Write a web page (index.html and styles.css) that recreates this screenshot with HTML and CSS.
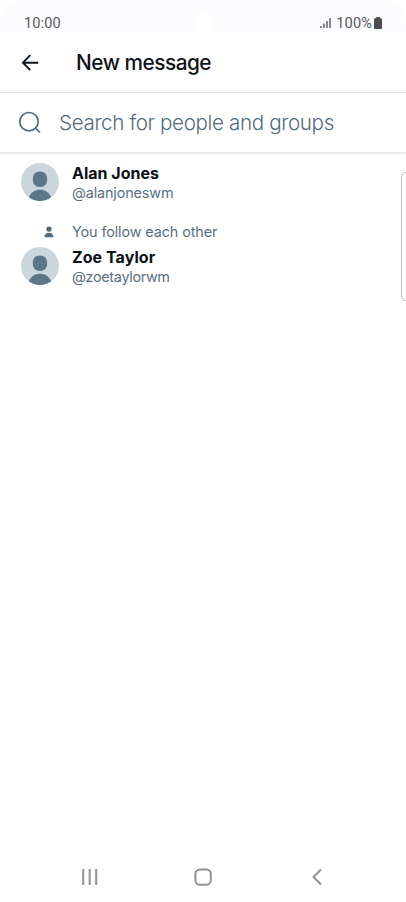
FILE: index.html
```html
<!DOCTYPE html>
<html lang="en">
<head>
<meta charset="utf-8">
<title>New message</title>
<link rel="stylesheet" href="styles.css">
</head>
<body>
<div class="screen">
  <div class="status">
    <span class="time">10:00</span>
    <span class="camera"></span>
    <div class="indicators">
      <svg class="signal" width="12" height="12" viewBox="0 0 12 12"><path d="M1 9v2M4 6.500V11M7 4v7M10 1v10" stroke="#626265" stroke-width="1.500" fill="none"/></svg>
      <span class="percent">100%</span>
      <svg class="battery" width="8" height="12" viewBox="0 0 8 12"><path d="M2.200 0h3.600v1.200H7q1 0 1 1V11q0 1-1 1H1q-1 0-1-1V2.200q0-1 1-1h1.200z" fill="#4d4d50"/></svg>
    </div>
  </div>
  <header class="header">
    <svg class="back" width="18" height="18" viewBox="0 0 18 18"><path d="M9.300 1.200 1.900 8.700l7.400 7.500M2 8.700h15.200" fill="none" stroke="#0f1720" stroke-width="1.900"/></svg>
    <h1 class="title">New message</h1>
  </header>
  <div class="search">
    <svg class="magnifier" width="24" height="24" viewBox="0 0 24 24"><circle cx="11" cy="10.700" r="9.200"/><path d="m17.500 17.200 4.400 4.300"/></svg>
    <span class="placeholder">Search for people and groups</span>
  </div>
  <main class="people">
    <div class="person">
      <svg class="avatar" viewBox="0 0 38 38"><circle cx="19" cy="19" r="19" fill="#c9d6de"/><path d="M19 8.500c4.900 0 7.200 3 7.200 7.800 0 4.900-2.700 7.700-7.200 7.700s-7.200-2.800-7.200-7.700c0-4.800 2.300-7.800 7.200-7.800zM7.800 34.300C10 29.300 14 26.700 19 26.700s9 2.600 11.200 7.600A19 19 0 0 1 7.800 34.300z" fill="#5c7688"/></svg>
      <div class="labels">
        <span class="name">Alan Jones</span>
        <span class="handle">@alanjoneswm</span>
      </div>
    </div>
    <div class="relation">
      <svg class="follow" width="10" height="12" viewBox="0 0 10 12"><path d="M5 .5c1.900 0 2.700 1.100 2.700 2.600S6.900 5.800 5 5.800 2.300 4.600 2.300 3.100 3.100.5 5 .5zM.6 11.300C.6 8.300 1.900 6.800 5 6.800s4.400 1.500 4.400 4.500z" fill="#536b7b"/></svg>
      <span class="mutual">You follow each other</span>
    </div>
    <div class="person">
      <svg class="avatar" viewBox="0 0 38 38"><circle cx="19" cy="19" r="19" fill="#c9d6de"/><path d="M19 8.500c4.900 0 7.200 3 7.200 7.800 0 4.900-2.700 7.700-7.200 7.700s-7.200-2.800-7.200-7.700c0-4.800 2.300-7.800 7.200-7.800zM7.800 34.300C10 29.300 14 26.700 19 26.700s9 2.600 11.200 7.600A19 19 0 0 1 7.800 34.300z" fill="#5c7688"/></svg>
      <div class="labels">
        <span class="name zoe">Zoe Taylor</span>
        <span class="handle zoe-handle">@zoetaylorwm</span>
      </div>
    </div>
  </main>
  <div class="edge-panel"></div>
  <nav class="nav">
    <svg width="18" height="18" viewBox="0 0 18 18"><path d="M2.200 1v16M8.700 1v16M15.200 1v16"/></svg>
    <svg width="18" height="18" viewBox="0 0 18 18"><rect x="1.400" y="1.400" width="15.400" height="15.400" rx="4.500"/></svg>
    <svg width="18" height="18" viewBox="0 0 18 18"><path d="M13 1.500 5.500 9l7.500 7.500"/></svg>
  </nav>
</div>
</body>
</html>
```
FILE: styles.css
```css
* { box-sizing: border-box; }
body { margin: 0; background: #fff; font-family: Inter, "Liberation Sans", sans-serif; color: #0f1419; }
.screen { position: relative; height: 902px; display: flex; flex-direction: column; overflow: hidden; background: #fefefe; }
.status { position: relative; height: 31px; padding: 14px 24px 0; display: flex; justify-content: space-between; align-items: flex-start; background: #fcfcff; border-radius: 24px 24px 0 0; font: 14.6px/18px Roboto, sans-serif; color: #58585b; }
.time { letter-spacing: .1px; }
.camera { position: absolute; left: 195px; top: 13px; width: 18px; height: 19px; border-radius: 50%; background: #fff; }
.indicators { display: flex; height: 18px; }
.signal { margin: 3px 4px 0 0; }
.percent { letter-spacing: .1px; }
.battery { margin: 3px 0 0 2px; }
.header { height: 62px; border-bottom: 1px solid #dedfe0; padding: 2px 0 0 21px; display: flex; align-items: center; }
.title { margin: 0 0 0 37px; font-size: 20.8px; font-weight: 500; line-height: 26px; letter-spacing: -.48px; white-space: nowrap; }
.search { height: 60px; flex: none; padding-left: 18px; display: flex; align-items: center; border-bottom: 1px solid #e9eaeb; box-shadow: 0 1px 2px rgba(0,0,0,.07); }
.magnifier { fill: none; stroke: #536b7a; stroke-width: 1.700; }
.placeholder { margin-left: 17px; font-size: 20.6px; font-weight: 350; line-height: 26px; letter-spacing: -.355px; white-space: nowrap; color: #536b7a; }
.people { flex: 1; padding: 10px 21px 0; }
.person { display: flex; height: 38px; }
.avatar { width: 38px; height: 38px; flex: none; margin-right: 13px; }
.labels { display: flex; flex-direction: column; }
.name { font-size: 16px; font-weight: 700; line-height: 20px; color: #0b1016; }
.zoe { letter-spacing: .07px; }
.handle, .mutual { font-size: 14.4px; line-height: 20px; letter-spacing: -.14px; color: #5b7180; white-space: nowrap; }
.zoe-handle { letter-spacing: -.32px; }
.mutual { letter-spacing: -.11px; }
.relation { display: flex; align-items: center; height: 20px; margin: 21px 0 5px 22px; }
.follow { margin: 0 18px 0 1px; }
.edge-panel { position: absolute; left: 401px; top: 172px; width: 12px; height: 129px; border: 1px solid #b9babb; border-radius: 5px; background: #fff; }
.nav { height: 50px; display: flex; align-items: center; justify-content: space-between; padding: 0 80px 0 81px; }
.nav svg { fill: none; stroke: #929294; stroke-width: 2; }
.nav svg:nth-child(2) { margin-right: 1px; }
```
